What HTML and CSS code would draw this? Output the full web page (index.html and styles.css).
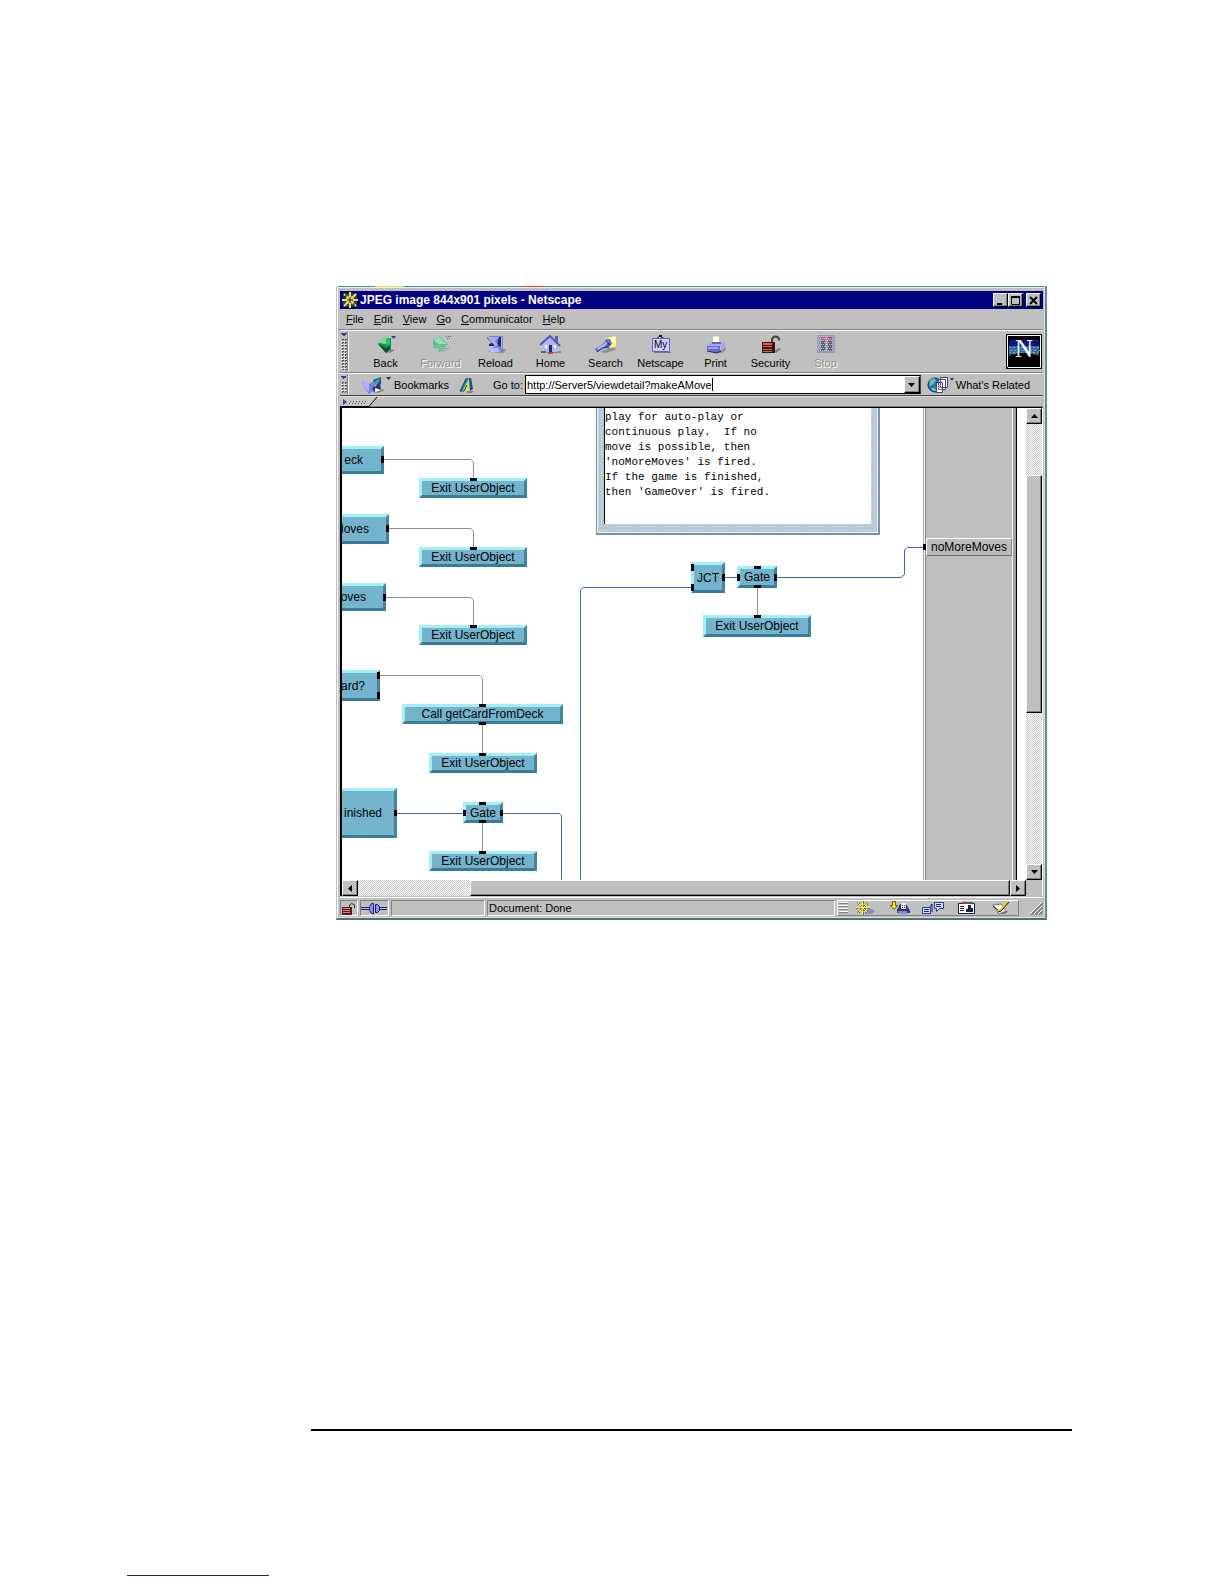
FILE: index.html
```html
<!DOCTYPE html>
<html lang="en">
	<head>
		<meta charset="utf-8">
		<title>JPEG image 844x901 pixels - Netscape</title>
		<meta name="viewport" content="width=device-width, initial-scale=1">
		<link rel="stylesheet" href="styles.css">
	</head>
	<body>
		<main class="window">
			<header class="titlebar">
				<svg class="app-icon" width="18" height="16" viewBox="0 0 18 16" aria-hidden="true">
					<path fill="#343c30" d="M2 1h14v14H2z"/>
					<path fill="none" stroke="#e8e070" stroke-width="2" d="M9 0v16M1 8h16M3 2l12 12M15 2L3 14"/>
					<path fill="none" stroke="#e8e070" d="M9 3.500L13.500 8 9 12.500 4.500 8z"/>
					<path fill="none" stroke="#112" d="M9 5v6M6 8h6M5 1v4M13 11v4M2 5h3"/>
				</svg>
				<h1>JPEG image 844x901 pixels - Netscape</h1>
				<button class="win-btn" aria-label="Minimize"><svg width="9" height="9"><path fill="#000" d="M1 7h5v2H1z"/></svg></button>
				<button class="win-btn" aria-label="Maximize"><svg width="9" height="9"><path fill="none" stroke="#000" d="M.5 1v7.500h8V1"/><path d="M0 0h9v2H0z"/></svg></button>
				<button class="win-btn close" aria-label="Close"><svg width="9" height="9"><path fill="none" stroke="#000" stroke-width="2" d="M1 1l7 7M8 1L1 8"/></svg></button>
			</header>

			<nav class="menu">
				<a href="#"><u>F</u>ile</a>
				<a href="#"><u>E</u>dit</a>
				<a href="#"><u>V</u>iew</a>
				<a href="#"><u>G</u>o</a>
				<a href="#"><u>C</u>ommunicator</a>
				<a href="#"><u>H</u>elp</a>
			</nav>

			<div class="toolbar">
				<div class="grip"><span></span></div>
				<div class="tools">
					<button class="tool">
						<svg width="24" height="19" viewBox="0 0 24 19">
							<path fill="#888" d="M11 17l6-3 4 1-5 3z"/>
							<path fill="#1c8f55" d="M4 9l8-9v3h5v11l-5 4z"/>
							<path fill="#6ee098" d="M4 8l8-8v9z"/>
							<path fill="#38b878" d="M12 3h4v6l-4 2z"/>
							<path fill="#0a5230" d="M4 9l8 4 4-2v3l-4 4z"/>
							<path fill="#334080" d="M17 1h5l-2.500 3z"/>
						</svg>
						Back
					</button>
					<button class="tool" disabled>
						<svg width="24" height="19" viewBox="0 0 24 19">
							<path fill="#a0a8a4" d="M8 16l8-3 6-1-8 5z"/>
							<path fill="#58c088" d="M4 4l5-1V0l10 9-9 9v-4l-6-1z"/>
							<path fill="#90e4b0" d="M4 4h5V1l9 8H9z"/>
							<path fill="none" stroke="#b4c0b8" stroke-dasharray="1 1" d="M4 6.500h12M4 10.500h13M5 12.500h12M10 14.500h8M11 16.500h6"/>
							<path fill="none" stroke="#666" stroke-dasharray="1 1" d="M17 1.500h5M18 3.500h3"/>
						</svg>
						Forward
					</button>
					<button class="tool">
						<svg width="24" height="19" viewBox="0 0 24 19">
							<path fill="#888" d="M6 17l14-3 2 1-3 3z"/>
							<path fill="#7c80d8" d="M5 1h14v13l-3 3H5v-3l7-3z"/>
							<path fill="#b8bcff" d="M5 13h9l2 4H6zM17 2h1v11h-1z"/>
							<path fill="#20266e" d="M3 2l8 9H5v-2l3-1-5-5zM15 2h2v10l-4-2z"/>
							<path fill="#a8acf0" d="M6 2h9l-4 4 3 4-3 1z"/>
						</svg>
						Reload
					</button>
					<button class="tool">
						<svg width="24" height="19" viewBox="0 0 24 19">
							<path fill="#888" d="M6 16h16v2H8z"/>
							<path fill="#5a5eb8" d="M16 1h3v7h-3z"/>
							<path fill="#b0b4f8" d="M4 9l7-7 8 8v7H4z"/>
							<path fill="none" stroke="#5458b8" stroke-width="2" d="M1 10l10-9 10 10"/>
							<path fill="#262a68" d="M10 10h3v7h-3z"/>
							<path fill="#fff" d="M6 10h2v3H6zM15 10h2v3h-2z"/>
							<path fill="#3a8050" d="M2 16h5v2H2z"/>
							<path fill="#c44" d="M9 17h5v2H9z"/>
						</svg>
						Home
					</button>
					<button class="tool">
						<svg width="24" height="19" viewBox="0 0 24 19">
							<path fill="#909090" d="M6 17l12-5 5 2-11 4z"/>
							<path fill="#ffff70" d="M13 3l9-2v10l-5 2z"/>
							<path fill="#fffff0" d="M17 4l3-2 1 5-3 1z"/>
							<path fill="#5c60c0" d="M1 14l8-5 4-5h3l2 5-4 3-6 1-5 4z"/>
							<path fill="#b0b4ff" d="M3 13l7-4 4-4 1 1-4 5-7 4z"/>
							<path fill="none" stroke="#24286c" d="M12 5l4 6M3 17l6-4 6-1"/>
						</svg>
						Search
					</button>
					<button class="tool">
						<svg width="24" height="19" viewBox="0 0 24 19">
							<path fill="none" stroke="#222" d="M7 4l4-3 5 3"/>
							<path fill="#111" d="M10 0h3v2h-3z"/>
							<path fill="#777" d="M5 17h17v1H5z"/>
							<path fill="#d0d2ff" stroke="#5a5fc0" d="M3.500 3.500h17v13h-17z"/>
							<text class="icon-text" x="5" y="13">My</text>
						</svg>
						Netscape
					</button>
					<button class="tool">
						<svg width="24" height="19" viewBox="0 0 24 19">
							<path fill="#909090" d="M8 17l10-2 4-3v3l-4 3z"/>
							<path fill="#fffff0" stroke="#c8c098" d="M9 1h6l1 7H8z"/>
							<path fill="#a4a8f0" d="M3 10l5-3h10l3-1-5 6H3z"/>
							<path fill="#686cc8" d="M3 11h13v6l-3 1-10-3z"/>
							<path fill="#a0a4f0" d="M4 12h10v2H4zM17 11l4-4v5l-4 4z"/>
							<path fill="none" stroke="#20246a" d="M8 8h9M3 16l10 2 4-2"/>
						</svg>
						Print
					</button>
					<button class="tool">
						<svg width="24" height="19" viewBox="0 0 24 19">
							<path fill="#808080" d="M15 16l5-3 2 1-5 4z"/>
							<path fill="none" stroke="#444" stroke-width="2" d="M13 8V4q1-2 3-2.500t4 2v2"/>
							<path fill="#401018" d="M3 7h13v11H3z"/>
							<path fill="#d06840" d="M4 8h9v2H4zM4 11h9v1H4zM4 14h9v1H4zM4 16h9v1H4z"/>
						</svg>
						Security
					</button>
					<button class="tool" disabled>
						<svg width="24" height="19" viewBox="0 0 24 19">
							<path fill="#9a9ab8" d="M3 0h18v18H3z"/>
							<path fill="#555878" d="M7 2h4v14H7zM14 2h4v14h-4z"/>
							<path fill="#d85868" d="M7 2h4v4H7zM14 3h4v3h-4z"/>
							<path fill="none" stroke="#c0c0c0" stroke-dasharray="1 1" d="M3 1.500h18M4 3.500h18M3 5.500h18M4 7.500h18M3 9.500h18M4 11.500h18M3 13.500h18M4 15.500h18M12.500 1v16"/>
						</svg>
						Stop
					</button>
				</div>
				<svg class="throbber" width="36" height="35" viewBox="0 0 36 35" role="img" aria-label="Netscape">
					<path fill="#000" d="M0 0h36v35H0z"/>
					<path fill="none" stroke="#fff" d="M1.500 33V1.500H35M34.500 2v31.500H2"/>
					<path fill="#101880" d="M3 6h30v7H3z"/>
					<path fill="#3468a8" d="M3 12h30v8H3z"/>
					<path fill="none" stroke="#58b0b8" stroke-dasharray="2 2" d="M3 13.500h30M4 16.500h30M3 18.500h30"/>
					<path fill="#000" d="M3 22q15-7 30 0v10H3z"/>
					<path fill="none" stroke="#7890a0" stroke-dasharray="3 1" d="M3 21.500q15-6 30 0"/>
					<text class="throbber-n" x="9" y="23">N</text>
				</svg>
			</div>

			<div class="location">
				<div class="grip"><span></span></div>
				<button class="quick">
					<svg width="32" height="18" viewBox="0 0 32 18">
						<path fill="#888" d="M12 16l10-3 3 1-7 3z"/>
						<path fill="#7c80e0" d="M2 5l7 3 5-3 2 8-7 5-4-5z"/>
						<path fill="#b0b4ff" d="M2 4l7 4v8l-4-4z"/>
						<path fill="#145c70" d="M13 4l8-3v7l-4 3z"/>
						<path fill="#40a8b0" d="M15 5l6-3-5 8z"/>
						<path fill="#2c3078" d="M12 12l8-4 1 5-7 3z"/>
						<path fill="#fff" d="M15 12l6 2-6 2z"/>
						<path fill="#303030" d="M26 1h5l-2.500 3z"/>
					</svg>
					Bookmarks
				</button>
				<svg class="link-icon" width="16" height="18" viewBox="0 0 16 18" aria-hidden="true">
					<path fill="#888" d="M8 15h7l-2 2H8z"/>
					<path fill="#189088" d="M7 2h3L4 14l-3 2z"/>
					<path fill="#e8e040" d="M9 6l2 1-2 8H6z"/>
					<path fill="#204890" d="M10 2h2l2 11-3 2z"/>
					<path fill="none" stroke="#104858" d="M7 3L1 15h4l3-6"/>
				</svg>
				<label for="url">Go to:</label>
				<div class="combo">
					<input id="url" type="text" value="http://Server5/viewdetail?makeAMove"><span class="caret"></span>
					<button class="raised" aria-label="Show history"><svg width="7" height="4"><path d="M0 0h7L3.500 4z"/></svg></button>
				</div>
				<button class="quick related">
					<svg width="28" height="18" viewBox="0 0 28 18">
						<circle cx="8" cy="9" r="7" fill="#2870b0" stroke="#102870"/>
						<path fill="#58c8b0" d="M3 4l4-2 2 3-4 4-3 1zM4 12l4 0 1 3H6z"/>
						<path fill="#fff" stroke="#446" d="M13.500 1.500h7v10h-7zM11.500 3.500h7v10h-7zM9.500 6.500h6v10h-6z"/>
						<path fill="none" stroke="#99a" d="M11 9.500h3M11 11.500h3M11 13.500h3"/>
						<path fill="#334080" d="M23 2h4l-2 3z"/>
					</svg>
					What's Related
				</button>
			</div>

			<div class="collapsed">
				<svg width="38" height="10" viewBox="0 0 38 10" aria-hidden="true">
					<path fill="#c8c8c8" d="M0 0h37l-8 9H0z"/>
					<path fill="none" stroke="#000" d="M37 0l-8 9.500H0"/>
					<path fill="#334080" d="M3 2l4 3-4 3z"/>
					<path fill="none" stroke="#444" stroke-dasharray="1 2" d="M10 4.500h18M9 6.500h18"/>
				</svg>
			</div>

			<div class="viewer">
				<section class="canvas" aria-label="makeAMove detail">
					<div class="note"><pre>play for auto-play or
continuous play.  If no
move is possible, then
'noMoreMoves' is fired.
If the game is finished,
then 'GameOver' is fired.</pre></div>
					<div class="panel"></div>
					<div class="terminal">noMoreMoves</div>

					<div class="node cut n-deck">eck</div>
					<div class="node cut n-moves1">Moves</div>
					<div class="node cut n-moves2">oves</div>
					<div class="node cut n-card">ard?</div>
					<div class="node cut n-finished">inished</div>
					<div class="node n-exit1">Exit UserObject</div>
					<div class="node n-exit2">Exit UserObject</div>
					<div class="node n-exit3">Exit UserObject</div>
					<div class="node n-call">Call getCardFromDeck</div>
					<div class="node n-exit4">Exit UserObject</div>
					<div class="node n-gate1">Gate</div>
					<div class="node n-exit5">Exit UserObject</div>
					<div class="node n-jct">JCT</div>
					<div class="node n-gate2">Gate</div>
					<div class="node n-exit6">Exit UserObject</div>

					<svg class="wires" width="683" height="472" aria-hidden="true">
						<g class="seq">
							<path d="M42 51.500H129l2.500 3V72"/>
							<path d="M47 120.500H129l2.500 3V141"/>
							<path d="M44 189.500H129l2.500 3V219"/>
							<path d="M38 267.500H138l2.500 3V297"/>
							<path d="M140.500 316V346M140.500 415V444M415.500 180V208"/>
						</g>
						<g class="data">
							<path d="M55 405.500H122M161 405.500H217l2.500 2V472"/>
							<path d="M238.500 472V182l2.500-2.500H350"/>
							<path d="M382 169.500H396M434 169.500H559l3.500-3V142l2.500-2.500H582"/>
						</g>
						<path class="pins" d="M39 48h3v7h-3zM44 117h3v7h-3zM41 186h3v7h-3zM35 264h3v7h-3zM35 284h3v7h-3zM52 402h3v6h-3z
							M128 70h7v3h-7zM128 139h7v3h-7zM128 217h7v3h-7zM137 296h7v3h-7zM137 314h7v3h-7zM137 345h7v3h-7z
							M137 394h7v3h-7zM137 412h7v3h-7zM137 443h7v3h-7zM121 402h3v6h-3zM158 402h3v6h-3z
							M349 156h3v7h-3zM349 176h3v7h-3zM380 166h3v7h-3zM395 166h3v7h-3zM432 166h3v7h-3z
							M412 158h7v3h-7zM412 177h7v3h-7zM412 207h7v3h-7zM581 136h3v6h-3z"/>
					</svg>
				</section>
				<div class="scroll-y">
					<button class="raised" aria-label="Scroll up"><svg width="7" height="4"><path d="M0 4h7L3.500 0z"/></svg></button>
					<div class="thumb raised"></div>
					<button class="raised" aria-label="Scroll down"><svg width="7" height="4"><path d="M0 0h7L3.500 4z"/></svg></button>
				</div>
				<div class="scroll-x">
					<button class="raised" aria-label="Scroll left"><svg width="4" height="7"><path d="M4 0v7L0 3.500z"/></svg></button>
					<div class="thumb raised"></div>
					<button class="raised" aria-label="Scroll right"><svg width="4" height="7"><path d="M0 0v7l4-3.500z"/></svg></button>
				</div>
			</div>

			<footer class="status">
				<div class="cell lock">
					<svg width="15" height="13" viewBox="0 0 15 13" aria-hidden="true">
						<path fill="none" stroke="#333" d="M8.500 5V3q2-3 5 0v3"/>
						<path fill="#5a1820" d="M1 5h10v8H1z"/>
						<path fill="none" stroke="#e08060" d="M2 6.500h7M2 8.500h7M2 10.500h7"/>
					</svg>
				</div>
				<div class="cell plug">
					<svg width="26" height="12" viewBox="0 0 26 12" aria-hidden="true">
						<path fill="none" stroke="#202878" d="M0 5.500h8M0 7.500h8M18 5.500h8M18 7.500h8"/>
						<path fill="#8890f0" stroke="#181c70" d="M12.500 1.500h-2l-2 3v4l2 3h2zM14.500 2.500h2l2 2v4l-2 2h-2z"/>
					</svg>
				</div>
				<div class="cell progress"></div>
				<div class="cell message">Document: Done</div>
				<div class="components">
					<div class="rails"></div>
					<a href="#" aria-label="Navigator">
						<svg width="22" height="14" viewBox="0 0 22 14"><path fill="#8888c8" d="M10 9l7-1 3 2-3 3h-7z"/><path fill="none" stroke="#665" stroke-width="2" d="M8 0v14M1 7h14M3 2l10 10M13 2L3 12"/><path fill="none" stroke="#f8f060" d="M7.500 0v14M1 6.500h14M3 2l10 10M13 2L3 12"/><circle cx="8" cy="7" r="4" fill="none" stroke="#f0e840"/></svg>
					</a>
					<a href="#" aria-label="Inbox">
						<svg width="22" height="14" viewBox="0 0 22 14"><path fill="#f8e820" stroke="#665800" d="M3.500.5h3v4h2l-3.500 4-3.500-4h2z"/><path fill="#303470" d="M8 9l3-6h6l4 7v2H8z"/><path fill="#e8e8ff" d="M12 2h5v6h-5z"/><path fill="#8088e0" d="M9 10h9v3H9z"/><path fill="none" stroke="#446" stroke-dasharray="1 1" d="M13 4.500h4M13 6.500h4"/></svg>
					</a>
					<a href="#" aria-label="Newsgroups">
						<svg width="24" height="14" viewBox="0 0 24 14"><path fill="#d8e0ff" stroke="#3038a0" d="M1.500 6.500h8v6h-8zM13.500 1.500h9v6h-4l-3 3v-3h-2z"/><path fill="none" stroke="#102878" d="M3 8.500h5M3 10.500h5M15 3.500h5M15 5.500h5M9 6l2-3v8"/></svg>
					</a>
					<a href="#" aria-label="Address Book">
						<svg width="18" height="14" viewBox="0 0 18 14"><path fill="#fff" stroke="#181c50" d="M.5 2.500h16v10H.5z"/><path fill="#c03030" d="M4 1h7v2H4z"/><path fill="#208050" d="M11 1h4v2h-4z"/><path fill="none" stroke="#223" d="M2 5.500h4M2 7.500h4M2 9.500h4"/><path fill="#182050" d="M10 4h3v3h2v4H8V8h2z"/></svg>
					</a>
					<a href="#" aria-label="Composer">
						<svg width="20" height="14" viewBox="0 0 20 14"><path fill="#777" d="M8 11l10-1-4 3H8z"/><path fill="#fffff0" stroke="#777" d="M2 4l8-1 5 7-7 3z"/><path fill="#e8d820" d="M6 9l3-1 8-8 2 1-9 9-3 1z"/><path fill="none" stroke="#111" d="M7 11l3-1 8-9M2 5l5 4"/></svg>
					</a>
				</div>
				<svg class="resize" width="13" height="13" aria-hidden="true"><path fill="none" stroke="#808080" stroke-width="2" d="M1 13L13 1M5 13l8-8M9 13l4-4"/><path fill="none" stroke="#fff" d="M0 12L12 0M4 12l8-8M8 12l4-4"/></svg>
			</footer>
		</main>
		<hr class="page-rule">
		<hr class="link-rule">
	</body>
</html>
```

FILE: styles.css
```css
body {
	margin: 0;
	background: #fff;
	color: #000;
	font: 11px/14px "Liberation Sans", Arial, sans-serif;
}
button, input {
	font: inherit;
	color: inherit;
	margin: 0;
	padding: 0;
	border: 0;
	background: none;
	border-radius: 0;
}
button {
	display: flex;
	align-items: center;
	justify-content: center;
}
a {
	color: inherit;
	text-decoration: none;
}
svg {
	display: block;
	flex: none;
}

/* window frame, with slivers of the desktop showing along its top edge */
.window {
	margin: 286px 177px 0 336px;
	border: 1px solid #c0c0c0;
	border-top: 0;
	border-right: 2px solid #5f8c8c;
	border-bottom: 2px solid #4c7474;
	padding: 2px 2px 1px 1px;
	background:
		linear-gradient(#e0e060, #e0e060) 38px 0 / 29px 1px no-repeat,
		linear-gradient(#e04030, #e04030) 185px 0 / 22px 1px no-repeat,
		linear-gradient(#3f9090, #3f9090) 0 0 / 100% 1px no-repeat,
		linear-gradient(#f0f0f0, #f0f0f0) 0 1px / 100% 1px no-repeat,
		#c0c0c0;
	box-shadow: inset 1px 0 #fff, inset -1px -1px #e0e0e0;
	display: flex;
	flex-direction: column;
}

.titlebar {
	margin: 3px 0 0 2px;
	height: 18px;
	padding: 0 2px 0 1px;
	background: #000080;
	color: #fff;
	display: flex;
	align-items: center;
}
.titlebar h1 {
	flex: 1;
	margin: 0 0 0 1px;
	font-size: 12px;
	line-height: 18px;
}
.win-btn, .raised {
	background: #c0c0c0;
	border: 1px solid;
	border-color: #fff #000 #000 #fff;
	box-shadow: inset -1px -1px #808080;
	box-sizing: border-box;
}
.win-btn {
	width: 15px;
	height: 14px;
}
.win-btn.close {
	margin-left: 3px;
}

.menu {
	height: 20px;
	padding-left: 8px;
	display: flex;
	align-items: center;
	gap: 10px;
	border-bottom: 1px solid #808080;
}

.toolbar, .location {
	margin-left: 2px;
	display: flex;
	border-top: 1px solid #fff;
	border-bottom: 1px solid #808080;
}
.toolbar {
	height: 41px;
}
.grip {
	width: 8px;
	border-right: 1px solid #808080;
	padding: 8px 0 2px 1px;
	box-sizing: border-box;
	box-shadow: 1px 0 #fff;
	background: conic-gradient(from 315deg at 50% 100%, #334080 90deg, transparent 0) 1px 2px / 6px 3px no-repeat;
}
.grip span {
	display: block;
	height: 100%;
	width: 6px;
	background: conic-gradient(#555 25%, transparent 0 50%, #fff 0 75%, transparent 0) 0 0 / 3px 3px;
}
.tools {
	flex: 1;
	display: flex;
	padding-left: 10px;
}
.tool {
	width: 55px;
	flex-direction: column;
	justify-content: flex-start;
	padding-top: 4px;
	gap: 2px;
	white-space: nowrap;
}
.tool:disabled {
	color: #909090;
	text-shadow: 1px 1px #fff;
}
.icon-text {
	font: 10px "Liberation Sans", Arial, sans-serif;
	fill: #000;
}
.throbber {
	margin: 3px 1px 0 0;
}
.throbber-n {
	font: 25px "Liberation Serif", "Times New Roman", serif;
	fill: #fff;
}

.location {
	height: 21px;
	align-items: center;
	border-bottom: 1px solid #404040;
}
.location .grip {
	align-self: stretch;
}
.quick {
	gap: 2px;
	white-space: nowrap;
	margin-left: 12px;
}
.link-icon {
	margin: 0 18px 0 10px;
}
.combo {
	flex: 1;
	display: flex;
	align-items: center;
	margin-left: 2px;
	height: 19px;
	padding-left: 1px;
	box-sizing: border-box;
	background: #fff;
	border: 1px solid #000;
	border-right-color: #404040;
}
.combo input {
	field-sizing: content;
	outline: none;
}
.caret {
	width: 1px;
	height: 13px;
	background: #000;
}
.combo button {
	margin-left: auto;
	width: 16px;
	height: 17px;
}
.related {
	margin: 0 13px 0 6px;
	gap: 1px;
}

.collapsed {
	margin-left: 2px;
	height: 11px;
	border-top: 1px solid #e0e0e0;
	border-bottom: 1px solid #808080;
	box-sizing: border-box;
}

.viewer {
	margin: 0 0 0 2px;
	border-top: 1px solid #000;
	border-left: 2px solid #000;
	border-right: 1px solid #fff;
	display: grid;
	grid-template-columns: 1fr 16px;
	grid-template-rows: 472px 16px;
}
.canvas {
	position: relative;
	overflow: hidden;
	background: #fff;
	font-size: 12px;
}
.wires {
	position: absolute;
	top: 0;
	left: 0;
	fill: none;
}
.seq {
	stroke: #909090;
}
.data {
	stroke: #4068b0;
}
.pins {
	fill: #000;
}

.note {
	position: absolute;
	left: 254px;
	top: 0;
	width: 284px;
	height: 127px;
	box-sizing: border-box;
	border: solid #8090a0;
	border-width: 0 2px 2px 1px;
	padding: 0 7px 8px 7px;
	background: radial-gradient(#d8e4ea 1px, #b4cad4 1px) 0 0 / 3px 3px;
	box-shadow: inset 1px 0 #e8f0f4, inset -1px -1px #f0f4f8;
}
.note pre {
	margin: 0;
	height: 116px;
	padding-top: 2px;
	box-sizing: border-box;
	background: #fff;
	border-left: 1px solid #000;
	font: 11px/15px "Liberation Mono", "Courier New", monospace;
}

.panel {
	position: absolute;
	left: 581px;
	top: 0;
	bottom: 0;
	width: 94px;
	box-sizing: border-box;
	background: conic-gradient(#b4b4b4 25%, #c6c6c6 0 50%, #bcbcbc 0 75%, #c6c6c6 0) 0 0 / 2px 2px;
	border-left: 1px solid #a8a8a8;
	border-right: 1px solid #000;
	box-shadow: inset 1px 0 #fff, inset 2px 0 #808080, inset -3px 0 #a0a0a0, inset -4px 0 #fff;
}
.terminal {
	position: absolute;
	left: 584px;
	top: 130px;
	width: 86px;
	height: 18px;
	box-sizing: border-box;
	background: #bcbcb8;
	border: 1px solid;
	border-color: #fff #808080 #707070 #fff;
	text-align: center;
	line-height: 16px;
}

/* flow nodes, placed on the diagram */
.node {
	position: absolute;
	width: 108px;
	height: 20px;
	box-sizing: border-box;
	border: 3px solid;
	border-color: #a4eef6 #43849f #3b7c98 #a4eef6;
	background: conic-gradient(#68a9c6 25%, #7abbd2 0 50%, #72b0cc 0 75%, #7abbd2 0) 0 0 / 2px 2px;
	display: flex;
	align-items: center;
	justify-content: center;
	white-space: nowrap;
}
.node.cut {
	left: 0;
	border-left: 0;
	justify-content: flex-end;
	overflow: hidden;
}
.n-deck { top: 38px; width: 42px; height: 28px; padding-right: 18px; }
.n-moves1 { top: 106px; width: 47px; height: 30px; padding-right: 17px; }
.n-moves2 { top: 175px; width: 44px; height: 28px; padding-right: 17px; }
.n-card { top: 262px; width: 38px; height: 31px; padding-right: 12px; }
.n-finished { top: 380px; width: 55px; height: 50px; padding-right: 12px; }
.n-exit1 { left: 77px; top: 70px; }
.n-exit2 { left: 77px; top: 139px; }
.n-exit3 { left: 77px; top: 217px; }
.n-call { left: 60px; top: 296px; width: 161px; }
.n-exit4 { left: 87px; top: 345px; }
.n-gate1 { left: 121px; top: 394px; width: 40px; height: 21px; }
.n-exit5 { left: 87px; top: 443px; }
.n-jct { left: 349px; top: 154px; width: 34px; height: 31px; }
.n-gate2 { left: 395px; top: 158px; width: 40px; height: 22px; }
.n-exit6 { left: 361px; top: 207px; height: 22px; }

.scroll-x, .scroll-y {
	display: flex;
	background: conic-gradient(#fff 25%, #c8c8c8 0 50%, #fff 0 75%, #c8c8c8 0) 0 0 / 2px 2px;
}
.scroll-x button, .scroll-y button {
	width: 16px;
	height: 16px;
	flex: none;
}
.scroll-y {
	flex-direction: column;
}
.scroll-y .thumb {
	height: 238px;
	margin: 51px 0 auto;
}
.scroll-x .thumb {
	flex: 1;
	margin-left: 112px;
}

.status {
	margin: 1px 0 0 2px;
	height: 20px;
	padding-top: 2px;
	box-sizing: border-box;
	border-top: 1px solid #fff;
	display: flex;
	gap: 2px;
}
.cell {
	height: 16px;
	box-sizing: border-box;
	border: 1px solid;
	border-color: #808080 #fff #fff #808080;
	display: flex;
	align-items: center;
}
.lock {
	width: 18px;
}
.plug {
	width: 29px;
}
.progress {
	width: 94px;
}
.message {
	flex: 1;
	padding-left: 1px;
}
.components {
	display: flex;
	align-items: center;
	width: 182px;
	height: 16px;
	box-sizing: border-box;
	border: 1px solid;
	border-color: #fff #808080 #808080 #fff;
}
.rails {
	width: 9px;
	height: 12px;
	margin: 0 1px;
	background: repeating-linear-gradient(#fff 0 1px, #808080 1px 2px, #c0c0c0 2px 3px);
}
.components a {
	flex: 1;
	display: flex;
	justify-content: center;
}
.resize {
	margin: 2px 0 0 9px;
}

.page-rule {
	margin: 509px 152px 0 311px;
	border: 0;
	border-top: 2px solid #000;
}
.link-rule {
	margin: 144px 0 8px 127px;
	width: 142px;
	border: 0;
	border-top: 1px solid #1c1c90;
}
```
